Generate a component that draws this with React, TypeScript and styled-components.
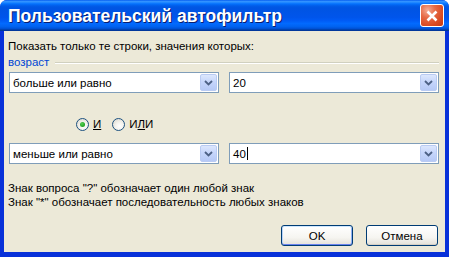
import React from "react";
import styled, { createGlobalStyle } from "styled-components";

const GlobalStyle = createGlobalStyle`
  html, body {
    margin: 0;
    padding: 0;
    background: #ffffff;
  }
`;

const uiFont = `"Liberation Sans", Arial, sans-serif`;

const Window = styled.div`
  width: 449px;
  height: 257px;
  display: flex;
  flex-direction: column;
  background: #0831d9;
  border-radius: 7px 7px 0 0;
  overflow: hidden;
  box-sizing: border-box;
`;

const TitleBar = styled.div`
  height: 31px;
  flex: none;
  display: flex;
  align-items: center;
  justify-content: space-between;
  padding: 0 5px 0 8px;
  background: linear-gradient(
    to bottom,
    #0058ee 0%,
    #3593ff 4%,
    #288eff 7%,
    #127dff 10%,
    #036ffc 13%,
    #0262ee 17%,
    #0057e5 22%,
    #0054e3 28%,
    #0055eb 56%,
    #005bf5 66%,
    #026afe 76%,
    #0062ef 86%,
    #0052d6 92%,
    #0040ab 96%,
    #003092 100%
  );
`;

const Title = styled.span`
  font-family: "Liberation Sans", Arial, sans-serif;
  font-weight: bold;
  font-size: 17.5px;
  color: #ffffff;
  text-shadow: 1px 1px 0 #0a1e6e;
  margin-top: 1px;
`;

const CloseButton = styled.div`
  width: 24px;
  height: 23px;
  box-sizing: border-box;
  border: 1px solid #ffffff;
  border-radius: 3px;
  display: flex;
  align-items: center;
  justify-content: center;
  background: radial-gradient(
    circle at 30% 25%,
    #f5ad96 0%,
    #e66a45 35%,
    #d84a22 70%,
    #c43a12 100%
  );
`;

const Body = styled.div`
  flex: 1;
  margin: 0 4px 5px 4px;
  background: #ece9d8;
  display: flex;
  flex-direction: column;
  padding: 0 6px 0 4px;
  font-family: ${uiFont};
  font-size: 11.5px;
  color: #000000;
`;

const TextLine = styled.div<{ $top?: number }>`
  line-height: 14px;
  height: 14px;
  margin-top: ${(p) => p.$top ?? 0}px;
  white-space: nowrap;
`;

const GroupRow = styled.div`
  display: flex;
  align-items: center;
  gap: 6px;
  margin-top: 2px;
  height: 14px;
  line-height: 14px;
`;

const GroupLabel = styled.span`
  color: #0046d5;
`;

const GroupLine = styled.div`
  flex: 1;
  height: 0;
  border-top: 1px solid #d0d0bf;
  border-bottom: 1px solid #ffffff;
  margin-top: 1px;
`;

const ComboRow = styled.div<{ $top: number }>`
  display: flex;
  gap: 10px;
  margin-top: ${(p) => p.$top}px;
  padding-left: 1px;
`;

const Combo = styled.div`
  width: 210px;
  height: 21px;
  box-sizing: border-box;
  border: 1px solid #7f9db9;
  background: #ffffff;
  display: flex;
  align-items: stretch;
  padding: 1px;
`;

const ComboText = styled.div`
  flex: 1;
  display: flex;
  align-items: center;
  padding-left: 2px;
  white-space: nowrap;
`;

const Caret = styled.span`
  display: inline-block;
  width: 1px;
  height: 13px;
  background: #000000;
  margin-left: 1px;
`;

const DropButton = styled.div`
  width: 17px;
  box-sizing: border-box;
  border: 1px solid #b9cbf3;
  border-radius: 2px;
  background: linear-gradient(to bottom, #dce7fd 0%, #c6d6fb 45%, #b6c9f6 100%);
  display: flex;
  align-items: center;
  justify-content: center;
`;

const RadioRow = styled.div`
  display: flex;
  align-items: center;
  margin-top: 24px;
  margin-left: 68px;
  height: 14px;
`;

const RadioItem = styled.label<{ $gap?: number }>`
  display: flex;
  align-items: center;
  gap: 4px;
  margin-right: ${(p) => p.$gap ?? 0}px;
`;

const RadioCircle = styled.span<{ $checked?: boolean }>`
  width: 13px;
  height: 13px;
  box-sizing: border-box;
  border-radius: 50%;
  border: 1px solid #1c5180;
  background: radial-gradient(circle at 60% 65%, #ffffff 0%, #f4f3ee 40%, #d5d2c6 100%);
  display: flex;
  align-items: center;
  justify-content: center;
  &::after {
    content: "";
    display: ${(p) => (p.$checked ? "block" : "none")};
    width: 5px;
    height: 5px;
    border-radius: 50%;
    background: radial-gradient(circle at 40% 35%, #55d155 0%, #21a121 70%);
  }
`;

const AccessKey = styled.span`
  text-decoration: underline;
`;

const ButtonRow = styled.div`
  display: flex;
  justify-content: flex-end;
  gap: 13px;
  margin-top: 16px;
  padding-right: 1px;
`;

const Button = styled.div<{ $default?: boolean }>`
  width: 72px;
  height: 21px;
  box-sizing: border-box;
  border: 1px solid #003c74;
  border-radius: 3px;
  background: linear-gradient(to bottom, #ffffff 0%, #f6f5f1 60%, #e3e1d9 100%);
  display: flex;
  align-items: center;
  justify-content: center;
  font-family: ${uiFont};
  font-size: 11.5px;
  box-shadow: ${(p) =>
    p.$default
      ? "inset 0 1px 0 #cee7ff, inset 0 -1px 0 #6982ee, inset 1px 0 0 #b8d3f8, inset -1px 0 0 #8fb0f3"
      : "inset 0 -1px 0 #d6d0c5"};
`;

const ComboBox = ({ value, caret }: { value: string; caret?: boolean }) => (
  <Combo>
    <ComboText>
      {value}
      {caret && <Caret />}
    </ComboText>
    <DropButton>
      <svg width="9" height="6" viewBox="0 0 9 6">
        <path d="M1 1 L4.5 4.5 L8 1" fill="none" stroke="#4d6185" strokeWidth="1.8" />
      </svg>
    </DropButton>
  </Combo>
);

export default function App() {
  return (
    <>
      <GlobalStyle />
      <Window>
        <TitleBar>
          <Title>Пользовательский автофильтр</Title>
          <CloseButton>
            <svg width="14" height="14" viewBox="0 0 14 14">
              <path d="M2.5 2.5 L11.5 11.5 M11.5 2.5 L2.5 11.5" stroke="#ffffff" strokeWidth="2.6" />
            </svg>
          </CloseButton>
        </TitleBar>
        <Body>
          <TextLine $top={8}>Показать только те строки, значения которых:</TextLine>
          <GroupRow>
            <GroupLabel>возраст</GroupLabel>
            <GroupLine />
          </GroupRow>
          <ComboRow $top={3}>
            <ComboBox value="больше или равно" />
            <ComboBox value="20" />
          </ComboRow>
          <RadioRow>
            <RadioItem $gap={11}>
              <RadioCircle $checked />
              <AccessKey>И</AccessKey>
            </RadioItem>
            <RadioItem>
              <RadioCircle />
              <span>
                И<AccessKey>Л</AccessKey>И
              </span>
            </RadioItem>
          </RadioRow>
          <ComboRow $top={12}>
            <ComboBox value="меньше или равно" />
            <ComboBox value="40" caret />
          </ComboRow>
          <TextLine $top={17}>Знак вопроса "?" обозначает один любой знак</TextLine>
          <TextLine>Знак "*" обозначает последовательность любых знаков</TextLine>
          <ButtonRow>
            <Button $default>OK</Button>
            <Button>Отмена</Button>
          </ButtonRow>
        </Body>
      </Window>
    </>
  );
}
